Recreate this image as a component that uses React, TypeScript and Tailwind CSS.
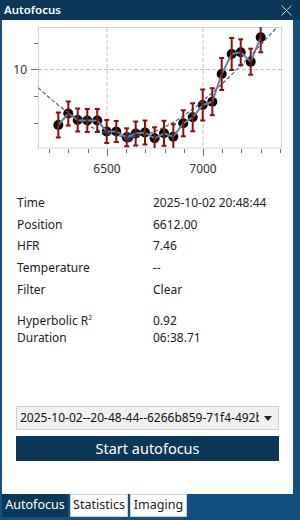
import React from "react";

const pts: [number, number, number][] = [
  [58.3, 125, 12.5],
  [68.3, 113.5, 12],
  [77.7, 120, 11.5],
  [87.3, 120.5, 11.5],
  [97.3, 120.5, 11.5],
  [106.7, 131.5, 11.5],
  [116.3, 131.5, 10.5],
  [126.7, 137.3, 9],
  [135.7, 133.5, 12],
  [145, 132.5, 12],
  [154.6, 138.3, 11],
  [164, 133.3, 12.5],
  [173.3, 136.7, 12.5],
  [183.3, 123.3, 13],
  [192.7, 117.3, 14],
  [202.7, 105, 15.5],
  [212.3, 101.7, 13.5],
  [221.7, 74, 16],
  [231.7, 54, 16],
  [240.7, 52.3, 13],
  [250.7, 61.7, 13],
  [260.7, 37.3, 15],
];

function hyper(x: number) {
  return 244 - 107.4 * Math.sqrt(1 + ((x - 128) / 85) ** 2);
}

const hyperPath = (() => {
  const a: string[] = [];
  for (let x = 38; x <= 282; x += 2) {
    a.push(`${a.length ? "L" : "M"}${x.toFixed(1)},${hyper(x).toFixed(1)}`);
  }
  return a.join(" ");
})();

const linePath = pts.map((p, i) => `${i ? "L" : "M"}${p[0]},${p[1]}`).join(" ");

const xTicks = [49, 68, 88, 107, 126, 145, 165, 184, 203, 222, 241, 261, 280];
const yTicks = [43, 96, 123];

function Chart() {
  return (
    <svg width="291" height="172" viewBox="2 20 291 172" className="block shrink-0">
      <defs>
        <clipPath id="plot">
          <rect x="38" y="27" width="244" height="121" />
        </clipPath>
      </defs>
      <rect x="38.5" y="27.5" width="243" height="120.5" fill="#fff" stroke="#d4d4d4" />
      <line x1="107" y1="28" x2="107" y2="148" stroke="#c4c4c4" strokeDasharray="4 2" />
      <line x1="203" y1="28" x2="203" y2="148" stroke="#c4c4c4" strokeDasharray="4 2" />
      <line x1="38" y1="69.5" x2="282" y2="69.5" stroke="#c4c4c4" strokeDasharray="4 2" />
      {xTicks.map((x) => (
        <line key={x} x1={x + 0.5} y1="149" x2={x + 0.5} y2={x === 107 || x === 203 ? 156 : 153} stroke="#4f7592" />
      ))}
      {yTicks.map((y) => (
        <line key={y} x1="34" y1={y + 0.5} x2="38" y2={y + 0.5} stroke="#4f7592" />
      ))}
      <line x1="31" y1="69.5" x2="38" y2="69.5" stroke="#4f7592" />
      <text x="27" y="74" textAnchor="end" fontSize="12" fill="#333" fontFamily="'Noto Sans', sans-serif">10</text>
      <text x="107" y="173" textAnchor="middle" fontSize="12" fill="#333" fontFamily="'Noto Sans', sans-serif">6500</text>
      <text x="203" y="173" textAnchor="middle" fontSize="12" fill="#333" fontFamily="'Noto Sans', sans-serif">7000</text>
      <g clipPath="url(#plot)">
        {pts.map((p, i) => (
          <circle key={i} cx={p[0]} cy={p[1]} r="5" fill="#000" />
        ))}
        <circle cx="128.5" cy="137.5" r="5" fill="#0b3a5c" />
        <path d={linePath} fill="none" stroke="#5b87a8" strokeWidth="2" strokeLinejoin="round" />
        <path d={hyperPath} fill="none" stroke="#3c6a8c" strokeWidth="1.2" strokeDasharray="4 2" />
        {pts.map((p, i) => (
          <g key={i} stroke="#8b1010" strokeWidth="2">
            <line x1={p[0]} y1={p[1] - p[2]} x2={p[0]} y2={p[1] + p[2]} />
            <line x1={p[0] - 2.5} y1={p[1] - p[2]} x2={p[0] + 2.5} y2={p[1] - p[2]} />
            <line x1={p[0] - 2.5} y1={p[1] + p[2]} x2={p[0] + 2.5} y2={p[1] + p[2]} />
          </g>
        ))}
      </g>
    </svg>
  );
}

const rows: [string, string][] = [
  ["Time", "2025-10-02 20:48:44"],
  ["Position", "6612.00"],
  ["HFR", "7.46"],
  ["Temperature", "--"],
  ["Filter", "Clear"],
];

export default function App() {
  return (
    <div
      className="w-[300px] h-[520px] bg-[#13507d] flex flex-col overflow-hidden text-[#222]"
      style={{ fontFamily: "'Noto Sans', 'Open Sans', sans-serif" }}
    >
      <div className="h-[20px] shrink-0 bg-[#0b3858] flex items-center justify-between pl-[4px] pr-[8px]">
        <span className="text-white text-[11.5px] font-semibold leading-none">Autofocus</span>
        <svg width="11" height="11" viewBox="0 0 11 11">
          <path d="M0.5 0.5 L10.5 10.5 M10.5 0.5 L0.5 10.5" stroke="#c9d3dc" strokeWidth="1" />
        </svg>
      </div>
      <div className="flex-1 flex pl-[2px] pr-[7px] min-h-0">
        <div className="flex-1 min-w-0 overflow-hidden bg-white flex flex-col">
          <Chart />
          <div className="pl-[15px] text-[12px]">
            {rows.map(([k, v]) => (
              <div key={k} className="flex h-[21.7px] items-center">
                <span className="w-[136px]">{k}</span>
                <span>{v}</span>
              </div>
            ))}
            <div className="h-[12.6px]" />
            <div className="flex h-[16.6px] items-center">
              <span className="w-[136px]">
                Hyperbolic R<sup className="text-[7px] -top-[5px]">2</sup>
              </span>
              <span>0.92</span>
            </div>
            <div className="flex h-[16.6px] items-center">
              <span className="w-[136px]">Duration</span>
              <span>06:38.71</span>
            </div>
          </div>
          <div className="mt-auto px-[14px] pb-[33px] flex flex-col gap-[6px] min-w-0">
            <div className="h-[24px] min-w-0 bg-[#f0f0f0] border border-[#cfcfcf] flex items-center pl-[3px] pr-[6px]">
              <div className="flex-1 min-w-0 overflow-hidden whitespace-nowrap text-[12px] text-[#111]">
                2025-10-02--20-48-44--6266b859-71f4-492b-a1c3
              </div>
              <svg width="8" height="5" viewBox="0 0 8 5" className="ml-[5px] shrink-0">
                <path d="M0 0 L8 0 L4 5 Z" fill="#222" />
              </svg>
            </div>
            <button className="h-[25px] bg-[#0b3858] text-white text-[14.5px] flex items-center justify-center">
              Start autofocus
            </button>
          </div>
        </div>
      </div>
      <div className="h-[23px] shrink-0 flex pl-[2px] text-[12.5px]">
        <div className="w-[66px] bg-[#0b3858] text-white flex items-center justify-center">Autofocus</div>
        <div className="ml-[2px] w-[58px] bg-white border border-[#c8d2da] flex items-center justify-center">Statistics</div>
        <div className="ml-[2px] w-[57px] bg-white border border-[#c8d2da] flex items-center justify-center">Imaging</div>
      </div>
      <div className="h-[3px] shrink-0" />
    </div>
  );
}
